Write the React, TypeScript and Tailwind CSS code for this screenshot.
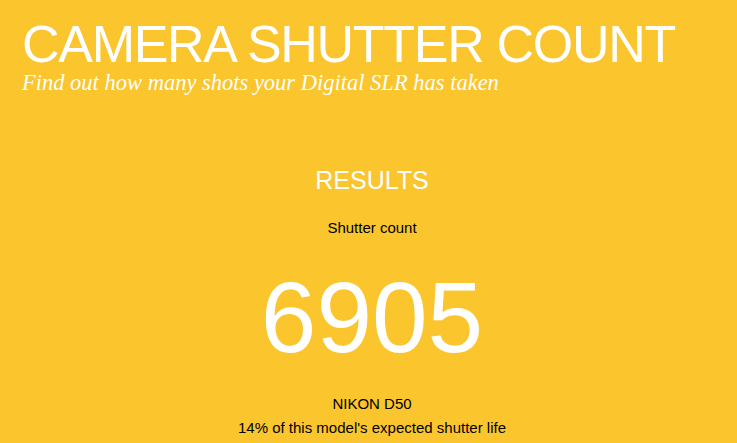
export default function App() {
  return (
    <div className="min-h-[443px] bg-[#fbc52d] text-white" style={{ fontFamily: "'Liberation Sans', Arial, sans-serif" }}>
      {/* Header */}
      <header className="px-[22px] pt-[18px]">
        <h1 className="text-[52px] leading-[52px] tracking-[-1.3px]">CAMERA SHUTTER COUNT</h1>
        <p className="font-['Liberation_Serif',serif] text-[22.5px] italic leading-[26px]">
          Find out how many shots your Digital SLR has taken
        </p>
      </header>

      {/* Results */}
      <main className="flex flex-col items-center pl-[7px] pt-[70px]">
        <h2 className="text-[25px] leading-[28px]">RESULTS</h2>
        <p className="mt-[25px] text-[15px] leading-[18px] text-black">Shutter count</p>
        <p className="mt-[25px] text-[100px] leading-[110px]">6905</p>
        <p className="mt-[23px] text-[15px] leading-[18px] text-black">NIKON D50</p>
        <p className="mt-[6px] text-[15px] leading-[18px] text-black">14% of this model's expected shutter life</p>
      </main>
    </div>
  );
}
